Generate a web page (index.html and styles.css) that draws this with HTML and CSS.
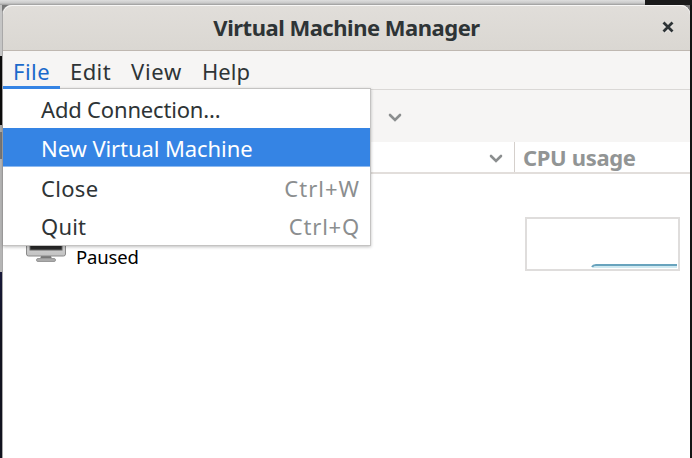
FILE: index.html
```
<!DOCTYPE html>
<html lang="en">
<head>
<meta charset="utf-8">
<title>Virtual Machine Manager</title>
<link rel="stylesheet" href="styles.css">
</head>
<body>
<main class="window">
  <header class="titlebar">
    <h1 class="title">Virtual Machine Manager</h1>
    <svg class="close" viewBox="0 0 12 12"><path class="close-shade" d="M2 3l8 8M10 3l-8 8"/><path d="M1.500 1.500l9 9M10.500 1.500l-9 9"/></svg>
  </header>
  <nav class="menubar">
    <div class="menu-title active"><span class="t-file">File</span></div>
    <div class="menu-title"><span class="t-edit">Edit</span></div>
    <div class="menu-title"><span class="t-view">View</span></div>
    <div class="menu-title"><span class="t-help">Help</span></div>
    <div class="menu">
      <div class="item"><span class="t-add">Add Connection...</span></div>
      <div class="item selected"><span class="t-new">New Virtual Machine</span></div>
      <div class="item after"><span class="t-close">Close</span><span class="key">Ctrl+W</span></div>
      <div class="item"><span class="t-quit">Quit</span><span class="key">Ctrl+Q</span></div>
    </div>
  </nav>
  <div class="toolbar"><svg class="chevron" viewBox="0 0 14 9"><path d="M2 2l5 5 5-5"/></svg></div>
  <div class="columns">
    <div class="col-name"><svg class="chevron" viewBox="0 0 14 9"><path d="M2 2l5 5 5-5"/></svg></div>
    <div class="col-cpu"><span class="t-cpu">CPU usage</span></div>
  </div>
  <div class="row">
    <svg class="monitor" viewBox="0 0 42 38">
      <defs><linearGradient id="bezel" x1="0" y1="0" x2="0" y2="1"><stop offset="0" stop-color="#eee"/><stop offset="1" stop-color="#c2c2c2"/></linearGradient></defs>
      <path d="M16 31h10l1 3H15z" fill="#777"/>
      <rect x="11.500" y="33.500" width="19" height="3" rx="1.500" fill="#aaa" stroke="#999"/>
      <rect x="1.500" y="1.500" width="39" height="29.500" rx="2" fill="url(#bezel)" stroke="#8a8a8a"/>
      <rect x="5" y="4" width="32" height="21" fill="#292929" stroke="#666"/>
    </svg>
    <span class="state">Paused</span>
    <svg class="graph" viewBox="0 0 155 54"><rect x="1" y="1" width="153" height="52"/><path class="fill" d="M68 49h84v2H68z"/><path d="M67 50q1-2 4-2h81"/></svg>
  </div>
</main>
</body>
</html>
```
FILE: styles.css
```
* { box-sizing: border-box; }
body {
  margin: 0;
  width: 692px;
  height: 458px;
  overflow: hidden;
  padding: 5px 2px 0 2px;
  font: 22px/30px "Noto Sans", sans-serif;
  color: #2e3436;
  background:
    linear-gradient(#1a1a1a, #1a1a1a) 645px 0 / 47px 5px no-repeat,
    linear-gradient(#dedede, #c9c9c9 60%, #999) 0 0 / 645px 5px no-repeat,
    linear-gradient(#141414, #141414) 690px 5px / 2px 453px no-repeat,
    linear-gradient(#c5c5c5 0 51px, #0c0c0c 51px 120px, #aaa 120px 127px, #777 127px 154px, #b5b5b5 154px 267px, #17193a 267px, #11131f 330px) 0 5px / 2px 453px no-repeat,
    #777;
}
.window {
  width: 688px;
  height: 453px;
  background: #fff;
  border-radius: 9px 9px 0 0;
  border-left: 1px solid #a9a8a8;
}
.titlebar {
  position: relative;
  height: 46px;
  display: flex;
  justify-content: center;
  align-items: center;
  border-radius: 9px 9px 0 0;
  background: linear-gradient(#e1deda, #dad7d2);
  border-bottom: 1px solid #bfb8b1;
  box-shadow: inset 0 1px #f8f7f6;
}
.title {
  margin: -2px 0 0;
  font-size: 22px;
  font-weight: 700;
  line-height: 30px;
  letter-spacing: -.49px;
  white-space: nowrap;
}
.close { position: absolute; right: 16px; top: 16px; width: 12px; height: 12px; }
.close path { fill: none; stroke: #2e3436; stroke-width: 2.8; }
.close .close-shade { stroke: #f4f3f2; }
.menubar {
  position: relative;
  height: 39px;
  display: flex;
  background: #f6f5f4;
  border-bottom: 1px solid #dad8d6;
}
.menu-title { height: 38px; padding: 5px 10px 0; white-space: nowrap; }
.menu-title.active {
  position: relative;
  z-index: 1;
  width: 57px;
  padding-left: 10px;
  color: #1b6acb;
  border-bottom: 3px solid #3584e4;
}
.t-file { letter-spacing: .5px; }
.t-edit { letter-spacing: .4px; }
.t-view { letter-spacing: .7px; }
.t-help { letter-spacing: .1px; }
.menu {
  position: absolute;
  left: 0;
  top: 37px;
  width: 368px;
  height: 158px;
  background: #fff;
  border: solid #c4c3c2;
  border-width: 1px 1px 1px 0;
  box-shadow: 0 1px 3px rgba(0,0,0,.25);
}
.item { height: 38px; padding: 5px 11px 0 38px; display: flex; justify-content: space-between; white-space: nowrap; }
.item:first-child { height: 39px; }
.item.selected { height: 39px; color: #fff; background: #3584e4; border-bottom: 1px solid #8db9ef; }
.item.after { padding-top: 6px; height: 39px; }
.t-add { letter-spacing: -.18px; }
.t-new { letter-spacing: -.08px; }
.t-close { letter-spacing: .3px; }
.t-quit { letter-spacing: .2px; }
.key { color: #8b8e8f; letter-spacing: .8px; margin-right: -1px; }
.item.after .key { letter-spacing: 1px; }
.toolbar { height: 52px; padding: 23px 0 0 385px; background: #f6f5f4; }
.chevron { display: block; width: 14px; height: 9px; fill: none; stroke: #8b8e8f; stroke-width: 2.6; stroke-linecap: round; }
.columns { height: 32px; display: flex; border-bottom: 2px solid #e2dedb; }
.col-name { width: 512px; padding: 12px 0 0 486px; border-right: 1px solid #d5d0cc; }
.col-cpu { padding: 0 0 0 8px; color: #929595; font-weight: 700; white-space: nowrap; letter-spacing: -.35px; }
.row { display: flex; padding-top: 43px; }
.monitor { width: 42px; height: 38px; margin: 8px 8px 0 22px; }
.state { width: 449px; padding: 27px 0 0 1px; font-size: 18.500px; line-height: 26px; letter-spacing: -.15px; color: #000; }
.graph { width: 155px; height: 54px; margin-left: 1px; fill: none; stroke: #dfdddc; stroke-width: 2; }
.graph path { stroke: #68a3bd; }
.graph .fill { fill: #cfe9f1; stroke: none; }
```
